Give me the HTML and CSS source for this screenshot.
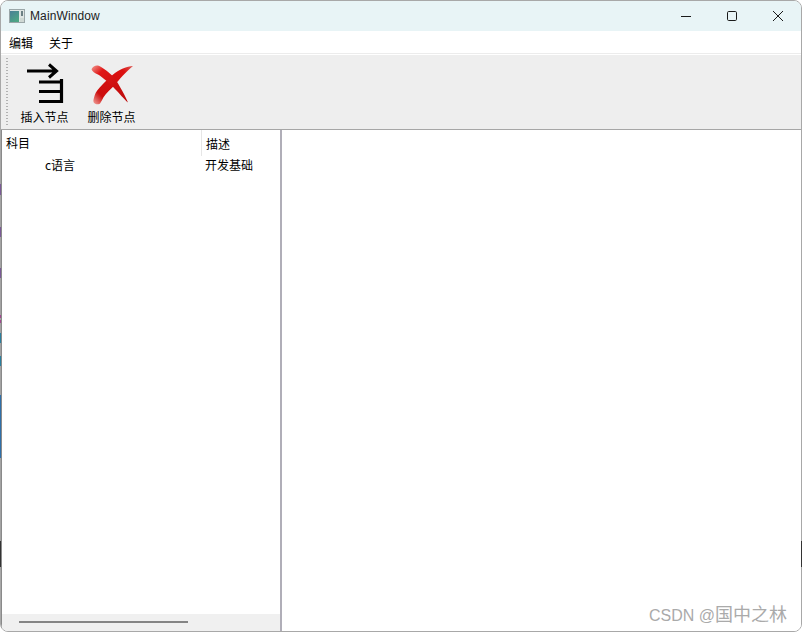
FILE: index.html
```html
<!DOCTYPE html>
<html>
  <head>
    <title>MainWindow</title>
    <link rel="stylesheet" href="styles.css">
  </head>
  <body>
    <div class="window">
      <div class="titleBar">
        <svg class="appIcon" width="16" height="14" viewBox="0 0 16 14">
          <defs>
            <linearGradient id="appFill" x1="0" y1="0" x2="0.6" y2="1">
              <stop offset="0" stop-color="#4a7f96"/>
              <stop offset="1" stop-color="#4da584"/>
            </linearGradient>
          </defs>
          <rect x="0.5" y="0.5" width="15" height="13" fill="#dfe5e3" stroke="#9aa6a8"/>
          <rect x="1" y="2" width="9" height="11" fill="url(#appFill)"/>
          <rect x="12" y="2" width="2" height="5" fill="#6c8084"/>
          <rect x="11" y="9" width="4" height="4" fill="#cfd8d4"/>
        </svg>
        <span class="windowTitle">MainWindow</span>
        <div class="windowButtons">
          <svg width="12" height="12" viewBox="0 0 12 12"><path d="M1 6.5h10" stroke="#1a1a1a" fill="none"/></svg>
          <svg width="12" height="12" viewBox="0 0 12 12"><rect x="1.5" y="1.5" width="9" height="9" rx="1.2" stroke="#1a1a1a" fill="none"/></svg>
          <svg width="12" height="12" viewBox="0 0 12 12"><path d="M1 1l10 10M11 1L1 11" stroke="#1a1a1a" fill="none"/></svg>
        </div>
      </div>

      <div class="menuBar">
        <span>编辑</span>
        <span>关于</span>
      </div>

      <div class="toolBar">
        <div class="grip"></div>
        <div class="toolButton">
          <svg width="49" height="48" viewBox="-3 0 49 48">
            <path d="M4 12h29M26 5.5l7.5 6.5-7.5 6.5" stroke="#000" stroke-width="3" fill="none"/>
            <path d="M16 23h22.5M16 32.5h22.5M16 42.5h24M38.5 20v24" stroke="#000" stroke-width="3.2" fill="none"/>
          </svg>
          <span>插入节点</span>
        </div>
        <div class="toolButton">
          <svg width="49" height="48" viewBox="-3 0 49 48">
            <defs>
              <linearGradient id="strokeA" gradientUnits="userSpaceOnUse" x1="2" y1="8" x2="36" y2="42">
                <stop offset="0" stop-color="#f08a82"/>
                <stop offset="0.2" stop-color="#e01818"/>
                <stop offset="1" stop-color="#bc0a0a"/>
              </linearGradient>
              <linearGradient id="strokeB" gradientUnits="userSpaceOnUse" x1="43" y1="7" x2="5" y2="44">
                <stop offset="0" stop-color="#dc5a54"/>
                <stop offset="0.2" stop-color="#dc1010"/>
                <stop offset="0.82" stop-color="#cc0e0e"/>
                <stop offset="1" stop-color="#ec8a84"/>
              </linearGradient>
            </defs>
            <path d="M43 7C37 7.5 29 10 22.5 16C19.5 18.5 17.5 20.5 12.5 25.5C8.5 29.5 5.5 33 4.8 36C4 39 3 41 3.5 43C4.5 45.5 9 46 10.2 44.3C11.5 42.3 12.5 40.3 13.5 38.2C16.5 33.5 20.5 30.5 25.2 25.5C28.5 21.5 36 12.5 43 7Z" fill="url(#strokeB)"/>
            <path d="M1.5 10.3C2.5 7 6 6 8 6.5C12.5 8 20.5 14.5 23.5 18C26.5 21.5 33.5 33 38 43.5C34 40.5 29 33.5 24.5 29.5C21 25.5 18 23 16 21.5C13 19 10 16.5 8 15.5C5 14.5 2 12.5 1.5 10.3Z" fill="url(#strokeA)"/>
          </svg>
          <span>删除节点</span>
        </div>
      </div>

      <div class="mainArea">
        <div class="treePane">
          <div class="treeHeader">
            <div class="nameCol">科目</div>
            <div class="descCol">描述</div>
          </div>
          <div class="treeRow">
            <div class="nameCol indented">c语言</div>
            <div class="descCol">开发基础</div>
          </div>
          <div class="treeSpacer"></div>
          <div class="hScroll"><div class="hThumb"></div></div>
        </div>
        <div class="detailPane"></div>
      </div>

      <div class="watermark">CSDN @<span class="watermarkName">国中之林</span></div>
    </div>
    <div class="edgeLeft"></div>
    <div class="edgeRight"></div>
  </body>
</html>
```

FILE: styles.css
```css
html, body { margin: 0; padding: 0; background: #fff; }
body { position: relative; font-family: "Liberation Sans", "Noto Sans CJK SC", sans-serif; font-size: 12px; color: #000; }

.window {
  position: relative;
  width: 802px;
  height: 632px;
  box-sizing: border-box;
  border: 1px solid #a8a8a8;
  border-radius: 8px;
  overflow: hidden;
  display: flex;
  flex-direction: column;
  background: #fff;
}

.titleBar { height: 30px; background: #e8f4f6; display: flex; align-items: center; padding-left: 8px; flex: none; }
.appIcon { margin-right: 5px; }
.windowTitle { font-size: 12px; letter-spacing: 0.12px; color: #222; }
.windowButtons { margin-left: auto; display: flex; }
.windowButtons svg { width: 12px; height: 12px; padding: 9px 17px; }

.menuBar { height: 22px; display: flex; align-items: center; gap: 16px; padding-left: 8px; flex: none; border-bottom: 1px solid #ececec; }
.menuBar span { font-family: "Noto Sans CJK SC", sans-serif; }

.toolBar { height: 74px; margin-top: 1px; background: #eeeeee; border-bottom: 1px solid #a6a6a6; display: flex; flex: none; padding-left: 5px; }
.grip { width: 2px; margin: 3px 0 4px 0; background: repeating-linear-gradient(to bottom, #b2b2b2 0 1px, transparent 1px 3px); }
.toolButton { width: 67px; display: flex; flex-direction: column; align-items: center; font-family: "Noto Sans CJK SC", sans-serif; }
.toolButton svg { display: block; margin-top: 4px; }
.toolButton span { margin-top: 1px; line-height: 17px; }
.grip + .toolButton { margin-left: 3px; }

.mainArea { flex: 1; display: flex; min-height: 0; }
.treePane { width: 281px; box-sizing: border-box; border-left: 1px solid #8a8a8a; border-right: 2px solid #b0aeb8; display: flex; flex-direction: column; flex: none; }
.treeHeader, .treeRow { display: flex; font-family: "Noto Sans CJK SC", sans-serif; flex: none; }
.treeHeader { height: 26px; align-items: center; }
.treeRow { height: 18px; align-items: center; margin-top: -1px; }
.nameCol { width: 200px; padding-left: 4px; box-sizing: border-box; }
.treeHeader .nameCol { border-right: 1px solid #e6e6e6; height: 26px; line-height: 26px; }
.descCol { padding-left: 4px; }
.treeRow .descCol { padding-left: 3px; }
.indented { padding-left: 43px; }
.treeSpacer { flex: 1; }
.hScroll { height: 17px; background: #f0f0f0; display: flex; align-items: center; padding-left: 17px; flex: none; }
.hThumb { width: 169px; height: 2px; margin-bottom: 1px; background: #858585; }
.detailPane { flex: 1; background: #fff; }

.watermark { position: absolute; right: 14px; bottom: 5px; font-family: "Liberation Sans", sans-serif; font-size: 16px; color: #aaaaaa; white-space: nowrap; }
.watermarkName { font-family: "Noto Sans CJK SC", sans-serif; font-size: 18px; }

.edgeLeft, .edgeRight { position: absolute; top: 170px; width: 1px; height: 400px; }
.edgeLeft { left: 0; background: linear-gradient(to bottom, #a3a3a3 0 14px, #7a5a96 14px 25px, #a3a3a3 25px 57px, #7a5a96 57px 67px, #a3a3a3 67px 98px, #7a5a96 98px 108px, #a3a3a3 108px 145px, #a04a90 145px 148px, #a3a3a3 148px 150px, #a04a90 150px 153px, #a3a3a3 153px 163px, #2a7f9e 163px 173px, #a3a3a3 173px 186px, #2a7f9e 186px 196px, #a3a3a3 196px 225px, #2f6fa8 225px 288px, #a3a3a3 288px 371px, #333 371px 397px, #a3a3a3 397px); }
.edgeRight { right: 0; background: linear-gradient(to bottom, #a8a8a8 0 371px, #333 371px 397px, #a8a8a8 397px); }
```
